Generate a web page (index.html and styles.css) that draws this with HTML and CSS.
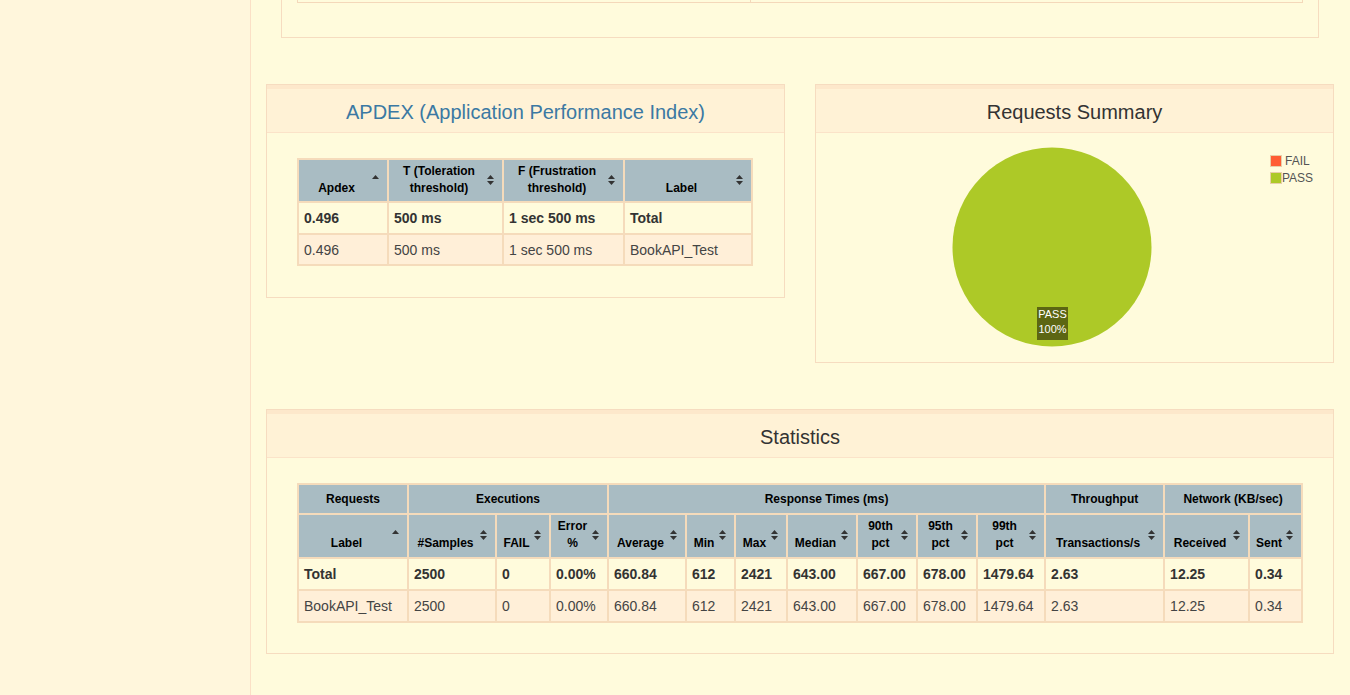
FILE: index.html
```html
<!DOCTYPE html>
<html lang="en">
<head>
<meta charset="utf-8">
<title>Dashboard</title>
<link rel="stylesheet" href="styles.css">
</head>
<body>
<div class="layout">
  <aside class="sidebar"></aside>
  <main class="main">
    <div class="top-panel">
      <div class="top-table">
        <div class="top-cell first"></div>
        <div class="top-cell"></div>
      </div>
    </div>

    <div class="row">
      <section class="panel">
        <div class="panel-heading"><h2 class="title link">APDEX (Application Performance Index)</h2></div>
        <div class="panel-body apdex-body">
          <table class="grid apdex">
            <colgroup><col style="width:90px"><col style="width:115px"><col style="width:121px"><col style="width:128px"></colgroup>
            <thead>
              <tr>
                <th>Apdex<svg class="sort" viewBox="0 0 7 10"><path d="M0 4L3.5 0L7 4Z"/></svg></th>
                <th>T (Toleration threshold)<svg class="sort" viewBox="0 0 7 10"><path d="M0 4L3.5 0L7 4Z M0 6L3.5 10L7 6Z"/></svg></th>
                <th>F (Frustration threshold)<svg class="sort" viewBox="0 0 7 10"><path d="M0 4L3.5 0L7 4Z M0 6L3.5 10L7 6Z"/></svg></th>
                <th>Label<svg class="sort" viewBox="0 0 7 10"><path d="M0 4L3.5 0L7 4Z M0 6L3.5 10L7 6Z"/></svg></th>
              </tr>
            </thead>
            <tbody>
              <tr class="total"><td>0.496</td><td>500 ms</td><td>1 sec 500 ms</td><td>Total</td></tr>
              <tr class="alt"><td>0.496</td><td>500 ms</td><td>1 sec 500 ms</td><td>BookAPI_Test</td></tr>
            </tbody>
          </table>
        </div>
      </section>

      <section class="panel">
        <div class="panel-heading"><h2 class="title">Requests Summary</h2></div>
        <div class="panel-body chart-body">
          <svg class="pie" width="517" height="229" viewBox="0 0 517 229">
            <circle cx="236" cy="114" r="99.5" fill="#adc927"/>
            <rect x="221" y="174" width="31" height="33" fill="#5c6613"/>
            <text x="236.5" y="185" class="pie-label">PASS</text>
            <text x="236.5" y="200" class="pie-label">100%</text>
            <rect x="454.5" y="22.5" width="11" height="11" fill="#ff5c33" stroke="#e8cfa8"/>
            <text x="469" y="32" class="legend">FAIL</text>
            <rect x="454.5" y="39.5" width="11" height="11" fill="#adc927" stroke="#e8cfa8"/>
            <text x="466" y="49" class="legend">PASS</text>
          </svg>
        </div>
      </section>
    </div>

    <section class="panel stats-panel">
      <div class="panel-heading"><h2 class="title">Statistics</h2></div>
      <div class="panel-body stats-body">
        <table class="grid stats">
          <colgroup>
            <col style="width:110px"><col style="width:88px"><col style="width:54px"><col style="width:58px">
            <col style="width:78px"><col style="width:49px"><col style="width:52px"><col style="width:70px">
            <col style="width:60px"><col style="width:60px"><col style="width:68px"><col style="width:119px">
            <col style="width:85px"><col style="width:53px">
          </colgroup>
          <thead>
            <tr class="group">
              <th>Requests</th>
              <th colspan="3">Executions</th>
              <th colspan="7">Response Times (ms)</th>
              <th>Throughput</th>
              <th colspan="2">Network (KB/sec)</th>
            </tr>
            <tr class="cols">
              <th>Label<svg class="sort" viewBox="0 0 7 10"><path d="M0 4L3.5 0L7 4Z"/></svg></th>
              <th>#Samples<svg class="sort" viewBox="0 0 7 10"><path d="M0 4L3.5 0L7 4Z M0 6L3.5 10L7 6Z"/></svg></th>
              <th>FAIL<svg class="sort" viewBox="0 0 7 10"><path d="M0 4L3.5 0L7 4Z M0 6L3.5 10L7 6Z"/></svg></th>
              <th>Error %<svg class="sort" viewBox="0 0 7 10"><path d="M0 4L3.5 0L7 4Z M0 6L3.5 10L7 6Z"/></svg></th>
              <th>Average<svg class="sort" viewBox="0 0 7 10"><path d="M0 4L3.5 0L7 4Z M0 6L3.5 10L7 6Z"/></svg></th>
              <th>Min<svg class="sort" viewBox="0 0 7 10"><path d="M0 4L3.5 0L7 4Z M0 6L3.5 10L7 6Z"/></svg></th>
              <th>Max<svg class="sort" viewBox="0 0 7 10"><path d="M0 4L3.5 0L7 4Z M0 6L3.5 10L7 6Z"/></svg></th>
              <th>Median<svg class="sort" viewBox="0 0 7 10"><path d="M0 4L3.5 0L7 4Z M0 6L3.5 10L7 6Z"/></svg></th>
              <th>90th pct<svg class="sort" viewBox="0 0 7 10"><path d="M0 4L3.5 0L7 4Z M0 6L3.5 10L7 6Z"/></svg></th>
              <th>95th pct<svg class="sort" viewBox="0 0 7 10"><path d="M0 4L3.5 0L7 4Z M0 6L3.5 10L7 6Z"/></svg></th>
              <th>99th pct<svg class="sort" viewBox="0 0 7 10"><path d="M0 4L3.5 0L7 4Z M0 6L3.5 10L7 6Z"/></svg></th>
              <th>Transactions/s<svg class="sort" viewBox="0 0 7 10"><path d="M0 4L3.5 0L7 4Z M0 6L3.5 10L7 6Z"/></svg></th>
              <th>Received<svg class="sort" viewBox="0 0 7 10"><path d="M0 4L3.5 0L7 4Z M0 6L3.5 10L7 6Z"/></svg></th>
              <th>Sent<svg class="sort" viewBox="0 0 7 10"><path d="M0 4L3.5 0L7 4Z M0 6L3.5 10L7 6Z"/></svg></th>
            </tr>
          </thead>
          <tbody>
            <tr class="total"><td>Total</td><td>2500</td><td>0</td><td>0.00%</td><td>660.84</td><td>612</td><td>2421</td><td>643.00</td><td>667.00</td><td>678.00</td><td>1479.64</td><td>2.63</td><td>12.25</td><td>0.34</td></tr>
            <tr class="alt"><td>BookAPI_Test</td><td>2500</td><td>0</td><td>0.00%</td><td>660.84</td><td>612</td><td>2421</td><td>643.00</td><td>667.00</td><td>678.00</td><td>1479.64</td><td>2.63</td><td>12.25</td><td>0.34</td></tr>
          </tbody>
        </table>
      </div>
    </section>
  </main>
</div>
</body>
</html>
```

FILE: styles.css
```css
html, body {
  margin: 0;
  padding: 0;
  height: 100%;
  overflow: hidden;
}
body {
  font-family: "Liberation Sans", Arial, sans-serif;
  font-size: 14px;
  color: #333;
  background: #fffbdc;
}
.layout {
  display: flex;
  min-height: 695px;
}
.sidebar {
  box-sizing: border-box;
  width: 251px;
  flex: 0 0 251px;
  background: #fff6dc;
  border-right: 1px solid #fbe0c6;
}
.main {
  flex: 1;
  padding: 0 16px 0 15px;
  min-width: 0;
}
.top-panel {
  margin: 0 15px;
  height: 37px;
  border: 1px solid #f6dcc0;
  border-top: none;
  padding: 0 15px;
}
.top-table {
  display: flex;
  height: 2px;
  border: 1px solid #f4d8ba;
  border-top: none;
}
.top-cell {
  flex: 1;
}
.top-cell.first {
  flex: 0 0 452px;
}
.top-cell + .top-cell {
  border-left: 1px solid #f4d8ba;
}
.row {
  display: flex;
  align-items: flex-start;
  gap: 30px;
  margin-top: 46px;
}
.row > .panel {
  flex: 1 1 0;
  min-width: 0;
}
.panel {
  border: 1px solid #f6dcc0;
  background: #fffbdc;
}
.panel-heading {
  border-top: 4px solid #fde8cb;
  background: #fff2d6;
  border-bottom: 1px solid #fbe3c9;
  padding: 12px 15px 9px;
  text-align: center;
}
.title {
  margin: 0;
  font-size: 20px;
  line-height: 22px;
  font-weight: normal;
  color: #333;
}
.title.link {
  color: #3b79a3;
}
.panel-body {
  padding: 25px 30px 31px;
}
.stats-body {
  padding-bottom: 30px;
}
.chart-body {
  padding: 0;
  height: 229px;
}
.pie {
  display: block;
}
.pie-label {
  font-family: "Liberation Sans", Arial, sans-serif;
  font-size: 11px;
  fill: #fff;
  text-anchor: middle;
}
.legend {
  font-family: "Liberation Sans", Arial, sans-serif;
  font-size: 12px;
  fill: #545454;
}
.stats-panel {
  margin-top: 46px;
}
.grid {
  border-collapse: collapse;
  table-layout: fixed;
}
.apdex { width: 454px; }
.stats { width: 1004px; }
.grid th, .grid td {
  border: 2px solid #f5dbbb;
}
.grid th {
  position: relative;
  background: #a9bcc3;
  color: #000;
  font-size: 12px;
  font-weight: bold;
  line-height: 17px;
  padding: 3px 18px 5px 5px;
  text-align: center;
  vertical-align: bottom;
}
.apdex th {
  padding: 3px 18px 4px 5px;
}
.grid .group th {
  padding: 6px 5px 5px;
  vertical-align: middle;
}
.sort {
  position: absolute;
  right: 8px;
  top: 50%;
  width: 7px;
  height: 10px;
  margin-top: -6px;
  fill: #333;
}
.grid td {
  padding: 5px;
  line-height: 20px;
  text-align: left;
  white-space: nowrap;
}
.apdex tr.alt td {
  padding-bottom: 4px;
}
.grid tr.total td {
  font-weight: bold;
  background: #fffbdc;
}
.grid tr.alt td {
  background: #ffefd8;
  color: #444;
}
```
